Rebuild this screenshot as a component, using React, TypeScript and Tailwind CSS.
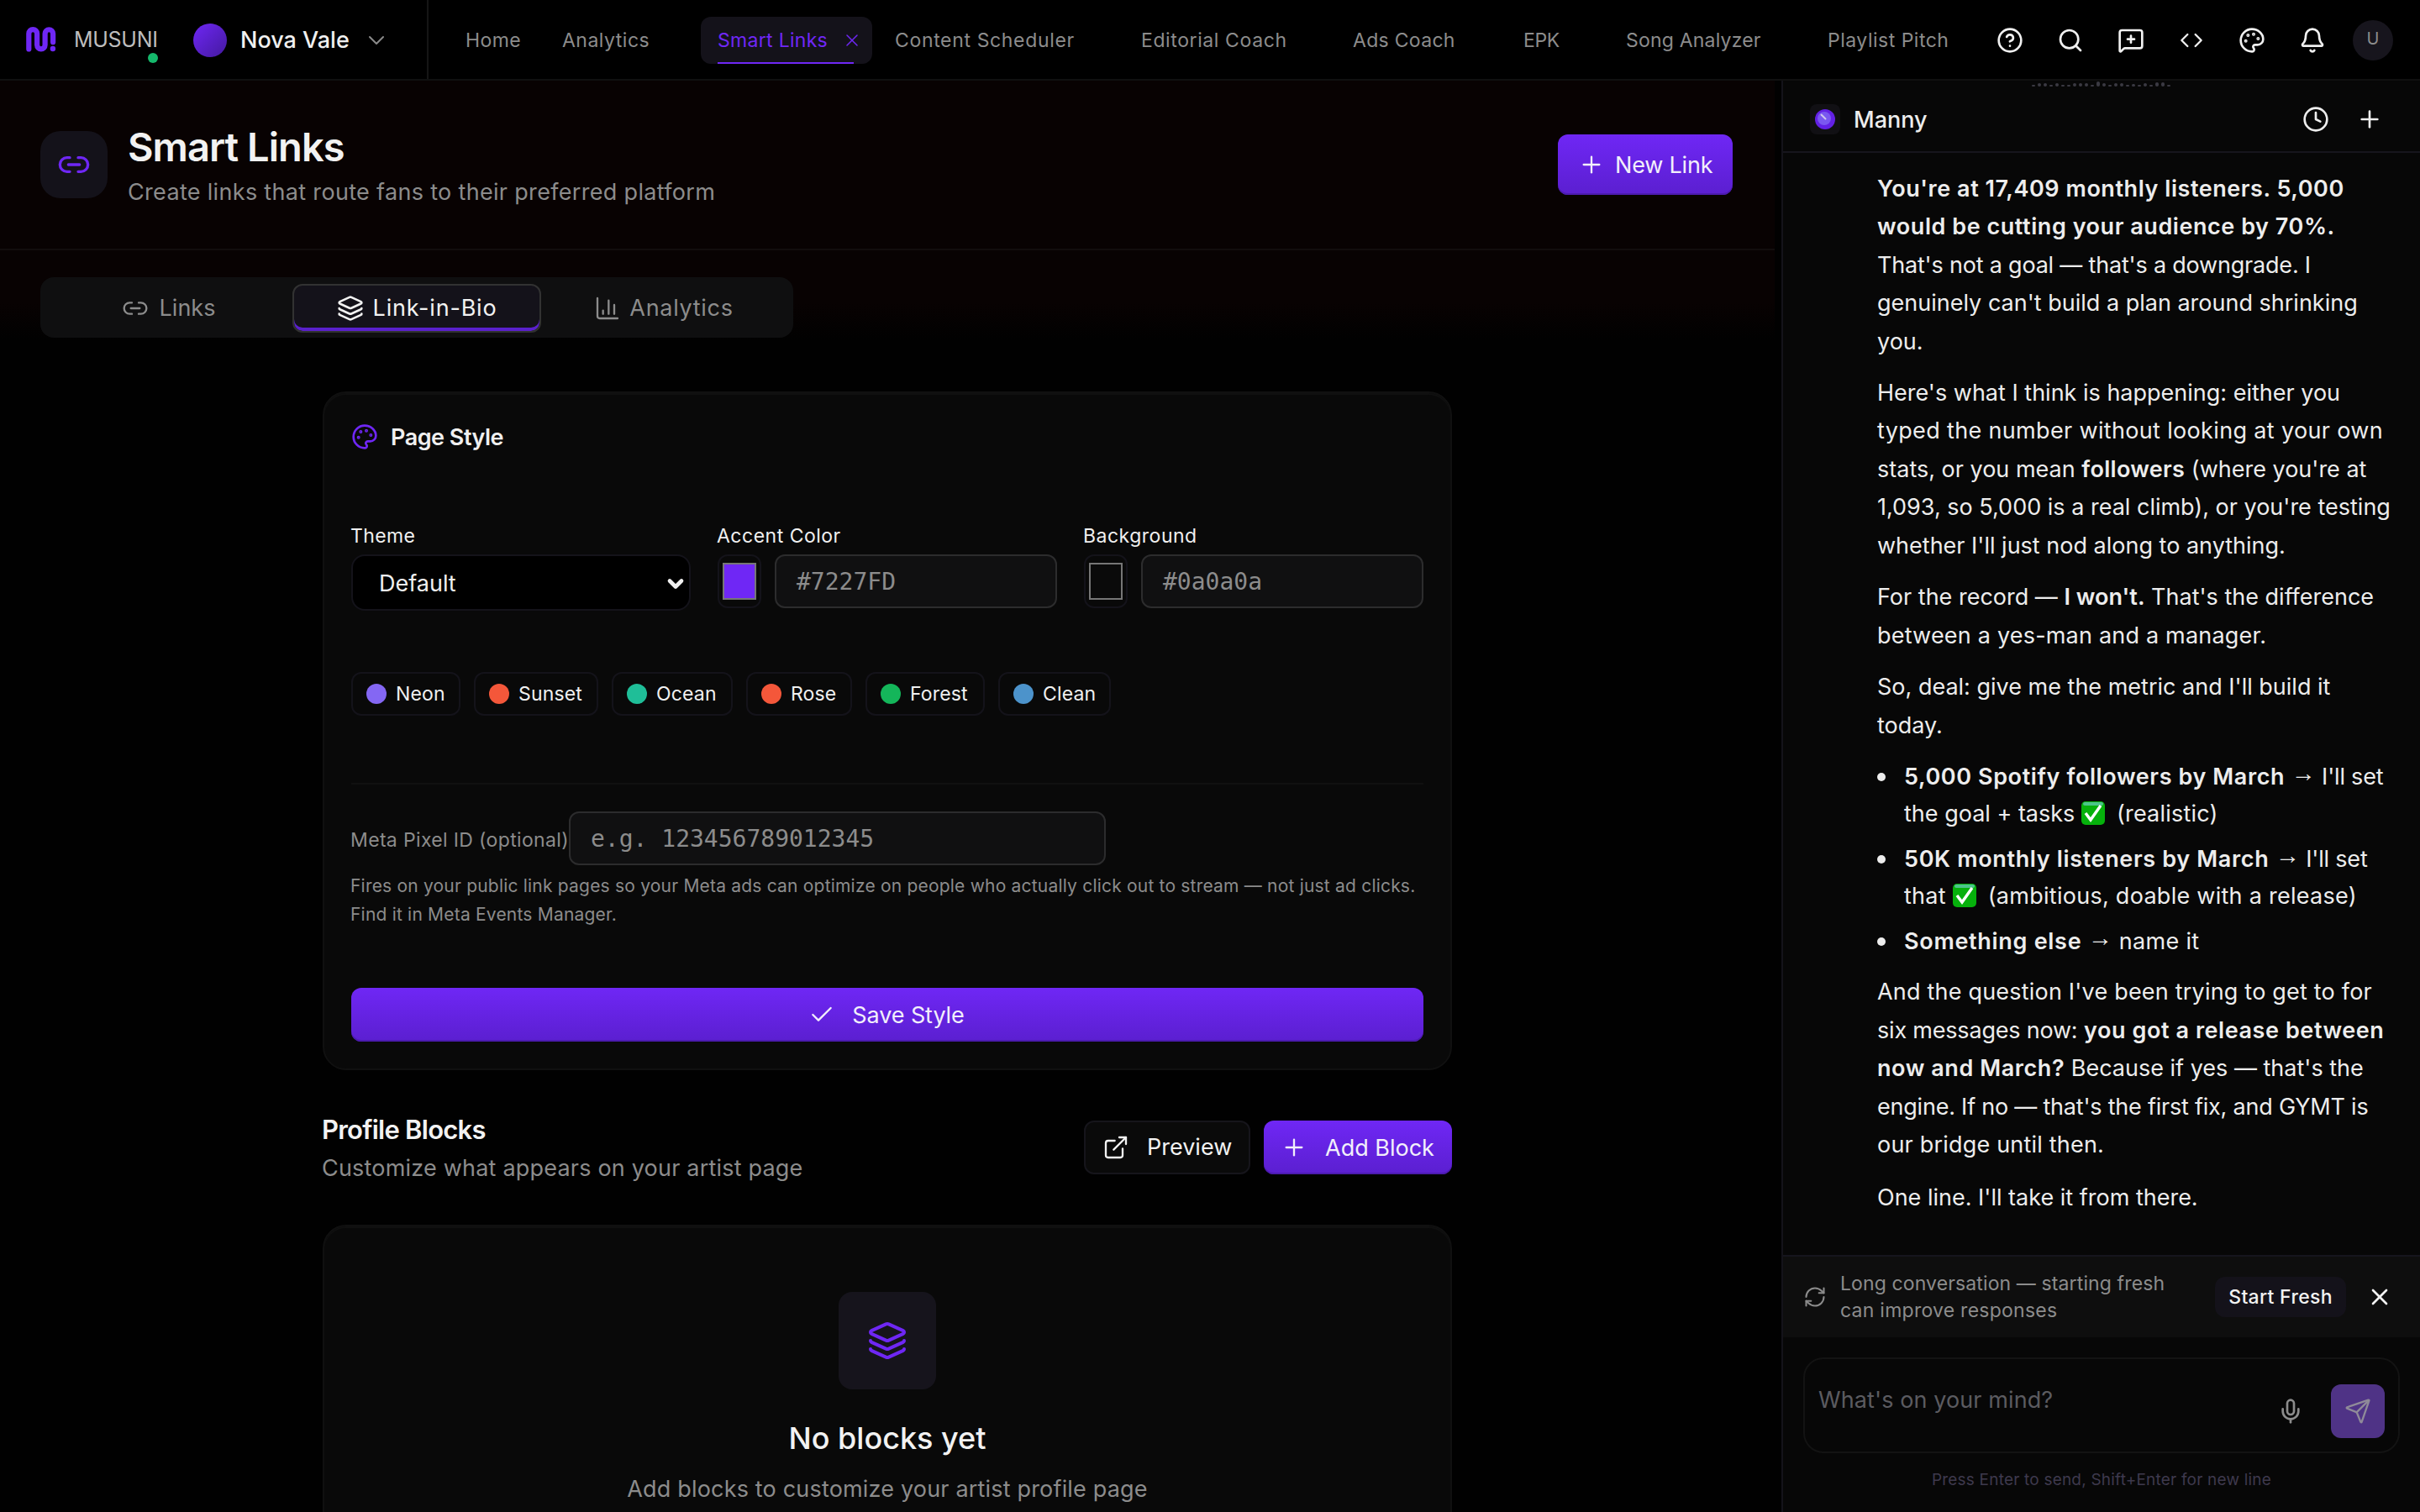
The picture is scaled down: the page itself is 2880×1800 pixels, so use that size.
import type { ReactNode } from 'react'
import {
  Bell,
  ChartColumn,
  Check,
  ChevronDown,
  CircleHelp,
  Clock,
  Code,
  ExternalLink,
  Layers,
  Link2,
  MessageSquarePlus,
  Mic,
  Palette,
  Plus,
  RefreshCw,
  Search,
  Send,
  X,
} from 'lucide-react'

const navLinks = [
  { label: 'Content Scheduler', className: 'ml-[27px] w-[213px] tracking-[0.65px]' },
  { label: 'Editorial Coach', className: 'ml-20 w-[172px] tracking-[0.6px]' },
  { label: 'Ads Coach', className: 'ml-20 w-[123px] tracking-[0.3px]' },
  { label: 'EPK', className: 'ml-20 w-[42px] tracking-[-0.4px]' },
  { label: 'Song Analyzer', className: 'ml-20 w-[160px] tracking-[0.2px]' },
  { label: 'Playlist Pitch', className: 'ml-20 w-[144px] tracking-[0.5px]' },
]

const presets = [
  { name: 'Neon', dot: 'bg-[#8467f3]', width: 'w-[130px]' },
  { name: 'Sunset', dot: 'bg-[#f4573a]', width: 'w-[148px]' },
  { name: 'Ocean', dot: 'bg-[#1fbe98]', width: 'w-[144px]' },
  { name: 'Rose', dot: 'bg-[#f4573a]', width: 'w-[126px]' },
  { name: 'Forest', dot: 'bg-[#14b65a]', width: 'w-[142px]' },
  { name: 'Clean', dot: 'bg-[#4c93cb]', width: 'w-[134px]' },
]

// Heights of the little audio meter that peeks out under the top bar
const meter = [2, 4, 4, 2, 4, 2, 2, 4, 4, 4, 2, 6, 4, 2, 4, 4, 2, 3, 2, 4, 2, 5, 5, 2]

const primaryButton =
  'flex items-center rounded-xl bg-linear-to-b from-[#6f27f5] to-[#5b1fd0] text-[27px] leading-none text-[#f2effb] shadow-[inset_0_-2px_0_#4c1bb0]'

function Logo() {
  return (
    <svg className="h-[30px] w-9" viewBox="0 0 36 30" fill="none">
      <path
        d="M3.3 26.5V8a4.9 4.9 0 0 1 9.8 0v13.6a4.75 4.75 0 0 0 9.5 0V8a4.75 4.75 0 0 1 9.5 0v10.2"
        stroke="#6f27f5"
        strokeWidth="6.2"
        strokeLinecap="round"
      />
      <circle cx="31.9" cy="26" r="3.2" fill="#6f27f5" />
    </svg>
  )
}

function CheckEmoji() {
  return (
    <svg className="mr-3.5 inline-block h-7 w-7 align-[-4px]" viewBox="0 0 28 28">
      <rect width="28" height="28" rx="5" fill="#06b10c" />
      <rect x="2" y="1" width="24" height="4" rx="2" fill="#4cc58a" />
      <path d="M5 14l6 8L23 5" fill="none" stroke="#fff" strokeWidth="3.4" />
    </svg>
  )
}

function TopBar() {
  return (
    <header className="flex h-24 shrink-0 items-center border-b-2 border-[#101010] bg-black">
      <div className="flex h-full w-[510px] items-center border-r-2 border-[#151515] pl-[31px]">
        <Logo />
        <div className="relative ml-[21px] w-[98px] pt-0.5 text-[25px] tracking-[-0.3px] text-[#bdbdbd]">
          MUSUNI
          <span className="absolute right-[-2px] bottom-[-8px] h-3 w-3 rounded-full bg-[#15b86b]" />
        </div>
        <div className="mt-0.5 ml-11 h-10 w-10 rounded-full bg-linear-to-br from-[#6f27f5] to-[#4419a0]" />
        <div className="ml-4 w-[130px] pt-0.5 text-[27px] font-medium whitespace-nowrap text-[#f0f0f0]">Nova Vale</div>
        <ChevronDown className="mt-0.5 ml-4 h-8 w-8 text-[#8a8a8a]" strokeWidth={1.5} />
      </div>
      <nav className="flex h-full items-center pt-0.5 text-[23px] whitespace-nowrap text-[#8c8c8c]">
        <a className="ml-11 w-[67px] tracking-[0.4px]">Home</a>
        <a className="ml-12 w-[105px] tracking-[0.5px]">Analytics</a>
        <a className="ml-[60px] flex h-14 w-[204px] flex-col rounded-xl bg-[#14121a] px-5 text-[#6f27f5]">
          <span className="flex flex-1 items-center pt-0.5">
            <span className="w-[148px] shrink-0 tracking-[0.3px]">Smart Links</span>
            <X className="h-6 w-6 shrink-0" strokeWidth={1.5} />
          </span>
          <span className="h-0.5 w-[162px] bg-[#6f27f5]" />
        </a>
        {navLinks.map((link) => (
          <a key={link.label} className={link.className}>
            {link.label}
          </a>
        ))}
      </nav>
      <div className="ml-auto flex items-center gap-10 pt-0.5 pr-8 text-[#f0f0f0]">
        <CircleHelp className="h-8 w-8" />
        <Search className="h-8 w-8" />
        <MessageSquarePlus className="h-8 w-8" />
        <Code className="h-7 w-8" />
        <Palette className="h-8 w-8" />
        <Bell className="h-8 w-8" />
        <div className="-ml-2 flex h-12 w-12 items-center justify-center rounded-full bg-[#17151d] pb-1 text-xl text-[#8c8c8c]">
          U
        </div>
      </div>
    </header>
  )
}

function PageHeader() {
  return (
    <div className="flex h-[202px] items-center border-b-2 border-[#120d0d] pr-[50px] pl-12">
      <div className="flex h-20 w-20 items-center justify-center rounded-3xl bg-[#14121a]">
        <Link2 className="h-10 w-10 text-[#6f27f5]" />
      </div>
      <div className="ml-6">
        <h1 className="text-[47px] leading-[63px] font-semibold tracking-[-0.95px] text-[#f2f2f2]">Smart Links</h1>
        <p className="pt-0.5 text-[27px] leading-[42px] tracking-[0.32px] text-[#8c8c8c]">
          Create links that route fans to their preferred platform
        </p>
      </div>
      <button className={`${primaryButton} ml-auto h-[72px] w-[208px] pl-6`}>
        <Plus className="h-8 w-8" strokeWidth={1.75} />
        <span className="ml-3 tracking-[-0.2px]">New Link</span>
      </button>
    </div>
  )
}

function Tabs() {
  return (
    <div className="mt-8 ml-12 flex h-[72px] w-[896px] items-center rounded-2xl bg-[#0f0f10] px-1 text-[27px] text-[#8c8c8c]">
      <div className="flex w-[296px] items-center justify-center gap-[13px] pt-0.5 pl-px">
        <Link2 className="h-8 w-8" strokeWidth={1.75} />
        Links
      </div>
      <div className="mt-0.5 flex h-[58px] w-[296px] items-center justify-center gap-[11px] rounded-xl border-2 border-[#323232] bg-[#14121a] tracking-[0.8px] text-[#f2f2f2] shadow-[inset_0_-4px_0_#5a20cc]">
        <Layers className="h-8 w-8" />
        Link-in-Bio
      </div>
      <div className="flex w-[296px] items-center justify-center gap-2.5 pt-0.5 pr-1 tracking-[0.7px]">
        <ChartColumn className="h-8 w-8" strokeWidth={1.75} />
        Analytics
      </div>
    </div>
  )
}

function ColorField({ label, value, swatch }: { label: string; value: string; swatch: string }) {
  return (
    <div>
      <div className="-ml-px text-[23px] leading-9 tracking-[0.5px]">{label}</div>
      <div className="mt-1 flex gap-4">
        <div className="flex h-16 w-[52px] items-center justify-center rounded-xl border-2 border-[#14131a]">
          <div className={`h-11 w-10 border-2 border-[#767676] ${swatch}`} />
        </div>
        <div className="flex h-16 flex-1 items-center rounded-xl border-2 border-[#2c2c2d] bg-[#101011] px-6 pt-0.5 font-['DejaVu_Sans_Mono',monospace] text-[28px] text-[#8c8c8c]">
          {value}
        </div>
      </div>
    </div>
  )
}

function PageStyleCard() {
  return (
    <section className="mt-16 rounded-[28px] border-2 border-[#101010] bg-[#090909] p-8 text-[#f0f0f0] shadow-[inset_0_2px_0_#101010]">
      <div className="flex h-10 items-center">
        <Palette className="h-8 w-8 text-[#6f27f5]" />
        <h2 className="ml-[15px] pt-0.5 text-[27px] font-semibold tracking-[-0.5px]">Page Style</h2>
      </div>

      <div className="mt-20 grid h-[108px] grid-cols-3 gap-8">
        <div>
          <div className="-ml-px text-[23px] leading-9 tracking-[0.4px]">Theme</div>
          <div className="mt-1 flex h-[67px] items-center rounded-2xl border-2 border-[#14131a] bg-black pt-[3px] pr-0.5 pl-[31px] text-[27px]">
            Default
            <ChevronDown className="ml-auto h-7 w-7" strokeWidth={4} />
          </div>
        </div>
        <ColorField label="Accent Color" value="#7227FD" swatch="bg-[#6f27f5]" />
        <ColorField label="Background" value="#0a0a0a" swatch="bg-[#0a0a0a]" />
      </div>

      <div className="mt-[72px] flex gap-4">
        {presets.map((preset) => (
          <div
            key={preset.name}
            className={`flex h-[52px] items-center rounded-xl border-2 border-[#14131a] pl-4 text-[23px] tracking-[0.15px] ${preset.width}`}
          >
            <span className={`h-6 w-6 rounded-full ${preset.dot}`} />
            <span className="ml-[11px]">{preset.name}</span>
          </div>
        ))}
      </div>

      <div className="mt-20 border-t-2 border-[#101010] pt-8 text-[#8c8c8c]">
        <div className="flex items-center">
          <label className="-ml-px w-[260px] pt-1 text-[23px] tracking-[0.35px] whitespace-nowrap">Meta Pixel ID (optional)</label>
          <div className="flex h-16 w-[639px] items-center rounded-xl border-2 border-[#2c2c2d] bg-[#101011] px-6 pt-0.5 font-['DejaVu_Sans_Mono',monospace] text-[28px]">
            e.g. 123456789012345
          </div>
        </div>
        <p className="mt-2 -ml-px text-[21px] leading-[34px] tracking-[0.2px] whitespace-nowrap">
          Fires on your public link pages so your Meta ads can optimize on people who actually click out to stream — not just ad clicks.
          <br />
          Find it in Meta Events Manager.
        </p>
      </div>

      <button className={`${primaryButton} mt-[70px] h-16 w-full justify-center pr-0.5`}>
        <Check className="h-8 w-8" strokeWidth={1.75} />
        <span className="ml-5 tracking-[-0.1px]">Save Style</span>
      </button>
    </section>
  )
}

function ProfileBlocks() {
  return (
    <>
      <div className="mt-12 flex h-[88px] items-center">
        <div className="-ml-px pt-0.5">
          <h2 className="text-[31px] leading-[46px] font-semibold tracking-[-0.75px] text-[#f2f2f2]">Profile Blocks</h2>
          <p className="mt-0.5 text-[27px] leading-[42px] tracking-[0.2px] text-[#8c8c8c]">
            Customize what appears on your artist page
          </p>
        </div>
        <button className="ml-auto flex h-16 w-[198px] items-center rounded-xl border-2 border-[#16151b] bg-[#0a0a0a] pl-5 text-[27px] text-[#f2f2f2]">
          <ExternalLink className="h-8 w-8" strokeWidth={1.75} />
          <span className="ml-[21px]">Preview</span>
        </button>
        <button className={`${primaryButton} ml-4 h-16 w-[224px] pl-5`}>
          <Plus className="h-8 w-8" strokeWidth={1.75} />
          <span className="ml-[21px]">Add Block</span>
        </button>
      </div>

      <section className="mt-12 flex h-[420px] flex-col items-center rounded-[28px] border-2 border-[#101010] bg-[#090909] pt-[78px] shadow-[inset_0_2px_0_#101010]">
        <div className="flex h-[116px] w-[116px] shrink-0 items-center justify-center rounded-2xl bg-[#16141c]">
          <Layers className="h-12 w-12 text-[#6f27f5]" />
        </div>
        <h3 className="mt-9 text-[36px] leading-[44px] font-medium text-[#f2f2f2]">No blocks yet</h3>
        <p className="mt-[18px] text-[27px] leading-[42px] tracking-[0.18px] text-[#8c8c8c]">
          Add blocks to customize your artist profile page
        </p>
      </section>
    </>
  )
}

function Arrow() {
  return <span className="relative -top-1 font-['Liberation_Sans'] text-[29px] leading-none">→</span>
}

function Bullet({ children }: { children: ReactNode }) {
  return (
    <li className="flex">
      <span className="mt-[17px] mr-[22px] h-2.5 w-2.5 shrink-0 rounded-full bg-[#ededed]" />
      <div>{children}</div>
    </li>
  )
}

function Chat() {
  return (
    <aside className="relative flex w-[760px] shrink-0 flex-col border-l-2 border-[#14131a] bg-[#070707] text-[#ededed]">
      <div className="absolute top-0 left-[296px] flex h-[7px] items-end gap-[3px]">
        {meter.map((height, i) => (
          <span key={i} className="w-1 rounded-full bg-[#3a3942]" style={{ height }} />
        ))}
      </div>

      <div className="flex h-[86px] shrink-0 items-center border-b-2 border-[#16151d] pt-2 pr-11 pl-8">
        <div className="flex h-9 w-9 items-center justify-center rounded-lg bg-[#111014]">
          <svg className="h-[26px] w-[26px]" viewBox="0 0 26 26">
            <circle cx="13" cy="13" r="12" fill="#6321e6" />
            <circle cx="12" cy="12" r="8" fill="#7a58f0" />
            <path d="M8.5 7.5l5 5" stroke="#cfc6ee" strokeWidth="2" strokeLinecap="round" />
          </svg>
        </div>
        <div className="ml-4 pt-0.5 text-[27px] font-medium">Manny</div>
        <Clock className="ml-auto h-8 w-8" />
        <Plus className="ml-8 h-8 w-8" />
      </div>

      <div className="flex-1 overflow-hidden pt-[19.5px] pl-28 text-[27px] leading-[45.5px] whitespace-nowrap [&_strong]:font-semibold">
        <p>
          <strong className="tracking-[0.55px]">
            You're at 17,409 monthly listeners. 5,000
            <br />
            would be cutting your audience by 70%.
          </strong>
          <br />
          <span className="tracking-[-0.2px]">That's not a goal — that's a downgrade. I</span>
          <br />
          genuinely can't build a plan around shrinking
          <br />
          you.
        </p>
        <p className="mt-[15.5px]">
          Here's what I think is happening: either you
          <br />
          <span className="tracking-[0.34px]">typed the number without looking at your own</span>
          <br />
          stats, or you mean <strong className="tracking-[0.3px]">followers</strong> (where you're at
          <br />
          1,093, so 5,000 is a real climb), or you're testing
          <br />
          whether I'll just nod along to anything.
        </p>
        <p className="mt-4">
          For the record — <strong>I won't.</strong> That's the difference
          <br />
          <span className="tracking-[0.2px]">between a yes-man and a manager.</span>
        </p>
        <p className="mt-4">
          So, deal: give me the metric and I'll build it
          <br />
          today.
        </p>
        <ul className="mt-[17px] flex flex-col gap-2.5 leading-[44px]">
          <Bullet>
            <strong className="tracking-[0.6px]">5,000 Spotify followers by March</strong> <Arrow />
            <span className="tracking-[-0.2px]"> I'll set</span>
            <br />
            the goal + tasks <CheckEmoji />
            <span className="tracking-[0.2px]">(realistic)</span>
          </Bullet>
          <Bullet>
            <strong className="tracking-[0.65px]">50K monthly listeners by March</strong> <Arrow />
            <span className="tracking-[-0.2px]"> I'll set</span>
            <br />
            <span className="tracking-[0.27px]">
              that <CheckEmoji />
              (ambitious, doable with a release)
            </span>
          </Bullet>
          <Bullet>
            <strong className="tracking-[0.7px]">Something else</strong> <Arrow />
            <span className="tracking-[0.3px]"> name it</span>
          </Bullet>
        </ul>
        <p className="mt-[15px]">
          <span className="tracking-[0.2px]">And the question I've been trying to get to for</span>
          <br />
          <span className="tracking-[-0.2px]">six messages now:</span>{' '}
          <strong className="tracking-[0.57px]">you got a release between</strong>
          <br />
          <strong className="tracking-[0.57px]">now and March?</strong> Because if yes — that's the
          <br />
          <span className="tracking-[-0.22px]">engine. If no — that's the first fix, and GYMT is</span>
          <br />
          <span className="tracking-[0.2px]">our bridge until then.</span>
        </p>
        <p className="mt-[17px]">One line. I'll take it from there.</p>
      </div>

      <div className="flex h-[98px] shrink-0 items-center border-t-2 border-[#16151d] bg-[#0e0e0e] pr-8 pl-6">
        <RefreshCw className="h-7 w-7 text-[#8c8c8c]" strokeWidth={1.75} />
        <p className="ml-4 text-[23px] leading-8 tracking-[0.12px] whitespace-nowrap text-[#8c8c8c]">
          Long conversation — starting fresh
          <br />
          <span className="tracking-[0.25px]">can improve responses</span>
        </p>
        <button className="ml-auto h-12 w-[156px] rounded-xl bg-[#14121a] text-[23px] font-medium tracking-[0.3px] text-[#f2f2f2]">
          Start Fresh
        </button>
        <X className="ml-6 h-8 w-8 text-[#f2f2f2]" />
      </div>

      <div className="h-[208px] shrink-0 px-6 pt-6">
        <div className="flex h-[114px] items-end rounded-3xl border-2 border-[#131313] pr-4 pb-4 pl-4">
          <span className="mt-7 self-start text-[27px] leading-[42px] tracking-[0.1px] text-[#5b5b60]">What's on your mind?</span>
          <Mic className="mb-4 ml-auto h-8 w-8 text-[#8c8c8c]" />
          <button className="ml-8 flex h-16 w-16 items-center justify-center rounded-xl bg-[#4f3386] text-[#8f8a99]">
            <Send className="h-8 w-8" strokeWidth={1.75} />
          </button>
        </div>
        <p className="mt-[17px] text-center text-[19px] leading-[30px] tracking-[0.2px] text-[#3e394d]">
          Press Enter to send, Shift+Enter for new line
        </p>
      </div>
    </aside>
  )
}

export default function App() {
  return (
    <div className="flex h-[1800px] w-[2880px] flex-col overflow-hidden bg-[#010101] font-[Inter,'Liberation_Sans',sans-serif]">
      <TopBar />
      <div className="flex min-h-0 flex-1">
        <main className="mr-2 w-[2112px] shrink-0 overflow-hidden bg-[linear-gradient(to_bottom,#080202_0,#080202_264px,#010101_310px)]">
          <PageHeader />
          <Tabs />
          <div className="mx-auto w-[1344px]">
            <PageStyleCard />
            <ProfileBlocks />
          </div>
        </main>
        <Chat />
      </div>
    </div>
  )
}
